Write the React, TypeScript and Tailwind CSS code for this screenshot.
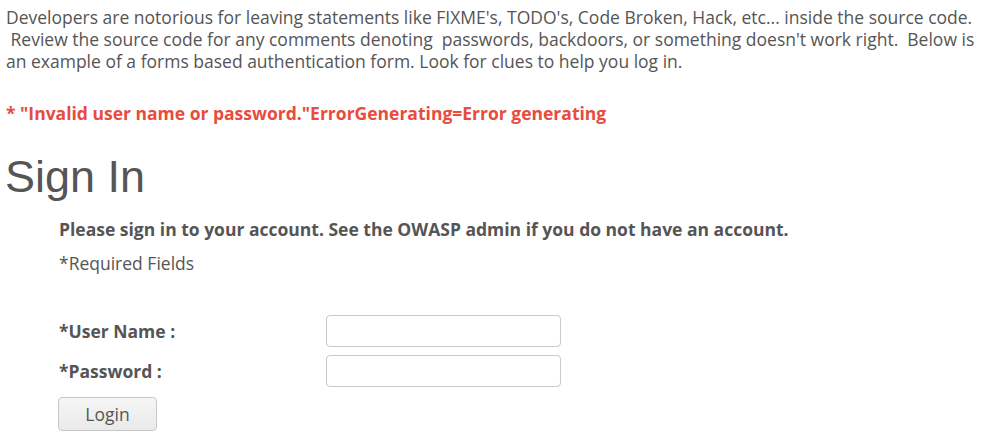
export default function App() {
  return (
    <div
      className="min-h-screen bg-white px-[6px] pt-[6px] text-[17.5px] leading-[22px] text-[#555]"
      style={{ fontFamily: '"Open Sans", sans-serif' }}
    >
      <p className="whitespace-nowrap">
        Developers are notorious for leaving statements like FIXME's, TODO's, Code Broken, Hack, etc... inside the source code.
        <br />
        &nbsp;Review the source code for any comments denoting&nbsp; passwords, backdoors, or something doesn't work right.&nbsp; Below is
        <br />
        an example of a forms based authentication form. Look for clues to help you log in.
      </p>

      <p className="mt-[30px] font-bold text-[#e74c3c]">
        * "Invalid user name or password."ErrorGenerating=Error generating
      </p>

      <h1
        className="mt-[29px] -ml-px text-[45px] leading-[48px] text-[#555]"
        style={{ fontFamily: '"Liberation Sans", Arial, sans-serif' }}
      >
        Sign In
      </h1>

      <div className="pl-[53px]">
        <p className="mt-[17px] font-bold">
          Please sign in to your account. See the OWASP admin if you do not have an account.
        </p>
        <p className="mt-[12px]">*Required Fields</p>

        {/* Form */}
        <div className="mt-[41px] grid grid-cols-[267px_235px] gap-y-[8px] items-center">
          <label className="font-bold">*User Name :</label>
          <input
            type="text"
            className="h-[32px] rounded-[4px] border border-[#ccc8c2] bg-white px-2 outline-none"
          />
          <label className="font-bold">*Password :</label>
          <input
            type="password"
            className="h-[32px] rounded-[4px] border border-[#ccc8c2] bg-white px-2 outline-none"
          />
        </div>

        <button className="mt-[10px] -ml-px h-[34px] w-[99px] rounded-[4px] border border-[#c8c8c8] bg-gradient-to-b from-[#f6f6f6] to-[#e9e9e9] text-[#555]">
          Login
        </button>
      </div>
    </div>
  );
}
